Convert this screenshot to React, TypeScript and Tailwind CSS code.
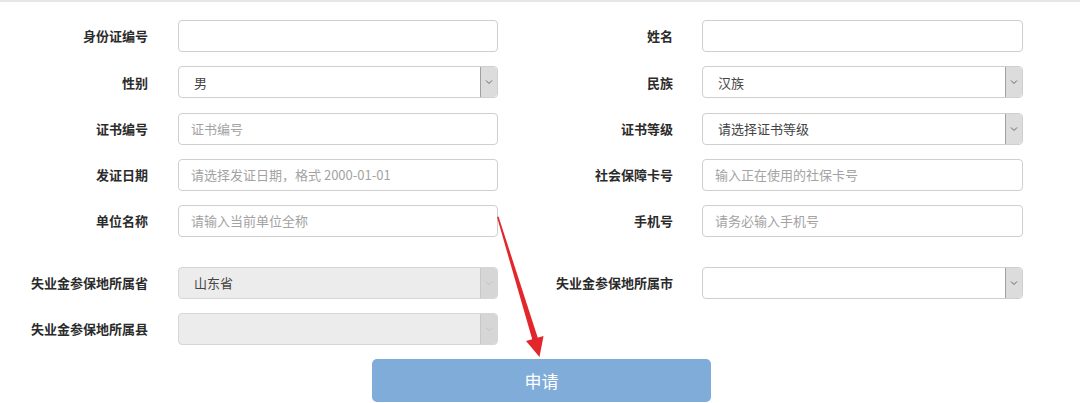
import React from "react";

const font = { fontFamily: '"Noto Sans CJK SC", "Liberation Sans", sans-serif' };

function Caret({ disabled }: { disabled?: boolean }) {
  return (
    <div
      className={`flex h-full w-[17px] items-center justify-center rounded-r-[4px] border-l ${
        disabled ? "border-[#c8c8c8] bg-[#d6d6d6]" : "border-[#a0a0a0] bg-[#dcdcdc]"
      }`}
    >
      <svg width="8" height="6" viewBox="0 0 8 6">
        <path d="M1 1.5 L4 4.5 L7 1.5" fill="none" stroke={disabled ? "#c4c4c4" : "#666"} strokeWidth="1" />
      </svg>
    </div>
  );
}

function Field({
  value,
  placeholder,
  select,
  disabled,
  w,
}: {
  value?: string;
  placeholder?: string;
  select?: boolean;
  disabled?: boolean;
  w: string;
}) {
  return (
    <div
      className={`flex h-[32px] items-center rounded-[4px] border ${
        disabled ? "border-[#d6d6d6] bg-[#ececec]" : "border-[#cfcfcf] bg-white"
      } ${w}`}
    >
      <div className={`flex-1 text-[13px] ${select ? "pl-[15px]" : "pl-[12px]"} ${value ? "text-[#444]" : "text-[#a3a3a3]"}`}>
        {value || placeholder || ""}
      </div>
      {select && <Caret disabled={disabled} />}
    </div>
  );
}

type F = { label: string; value?: string; placeholder?: string; select?: boolean; disabled?: boolean };

function Left({ f }: { f: F }) {
  return (
    <div className="flex items-center">
      <div className="mr-[30px] w-[148px] text-right text-[13px] font-bold text-[#2b2b2b]">{f.label}</div>
      <Field {...f} w="w-[320px]" />
    </div>
  );
}

function Right({ f }: { f?: F }) {
  if (!f) return <div />;
  return (
    <div className="flex items-center">
      <div className="mr-[29px] w-[133px] text-right text-[13px] font-bold text-[#2b2b2b]">{f.label}</div>
      <Field {...f} w="w-[321px]" />
    </div>
  );
}

function Row({ l, r, className = "" }: { l: F; r?: F; className?: string }) {
  return (
    <div className={`grid grid-cols-[540px_540px] ${className}`}>
      <Left f={l} />
      <Right f={r} />
    </div>
  );
}

export default function App() {
  return (
    <div className="relative h-[403px] w-[1080px] overflow-hidden bg-white" style={font}>
      <div className="h-[2px] w-full bg-[#e6e6e6]" />
      <div className="flex flex-col pt-[18px]">
        <div className="flex flex-col gap-[14.25px]">
          <Row l={{ label: "身份证编号" }} r={{ label: "姓名" }} />
          <Row l={{ label: "性别", value: "男", select: true }} r={{ label: "民族", value: "汉族", select: true }} />
          <Row
            l={{ label: "证书编号", placeholder: "证书编号" }}
            r={{ label: "证书等级", value: "请选择证书等级", select: true }}
          />
          <Row
            l={{ label: "发证日期", placeholder: "请选择发证日期，格式 2000-01-01" }}
            r={{ label: "社会保障卡号", placeholder: "输入正在使用的社保卡号" }}
          />
          <Row
            l={{ label: "单位名称", placeholder: "请输入当前单位全称" }}
            r={{ label: "手机号", placeholder: "请务必输入手机号" }}
          />
        </div>
        <div className="mt-[30px] flex flex-col gap-[14px]">
          <Row
            l={{ label: "失业金参保地所属省", value: "山东省", select: true, disabled: true }}
            r={{ label: "失业金参保地所属市", select: true }}
          />
          <Row l={{ label: "失业金参保地所属县", select: true, disabled: true }} />
        </div>
        <div className="mt-[14px] flex pl-[372px]">
          <button className="flex h-[43px] w-[339px] items-center justify-center rounded-[5px] bg-[#80acd9] text-[17px] text-white">
            申请
          </button>
        </div>
      </div>
      <svg className="pointer-events-none absolute left-0 top-0" width="1080" height="403" viewBox="0 0 1080 403">
        <path d="M497 217 L533 342 L538.5 340 L498.5 216.5 Z" fill="#e3262b" />
        <path d="M526 341 L539.5 357 L543.5 336 Z" fill="#e3262b" />
      </svg>
    </div>
  );
}
